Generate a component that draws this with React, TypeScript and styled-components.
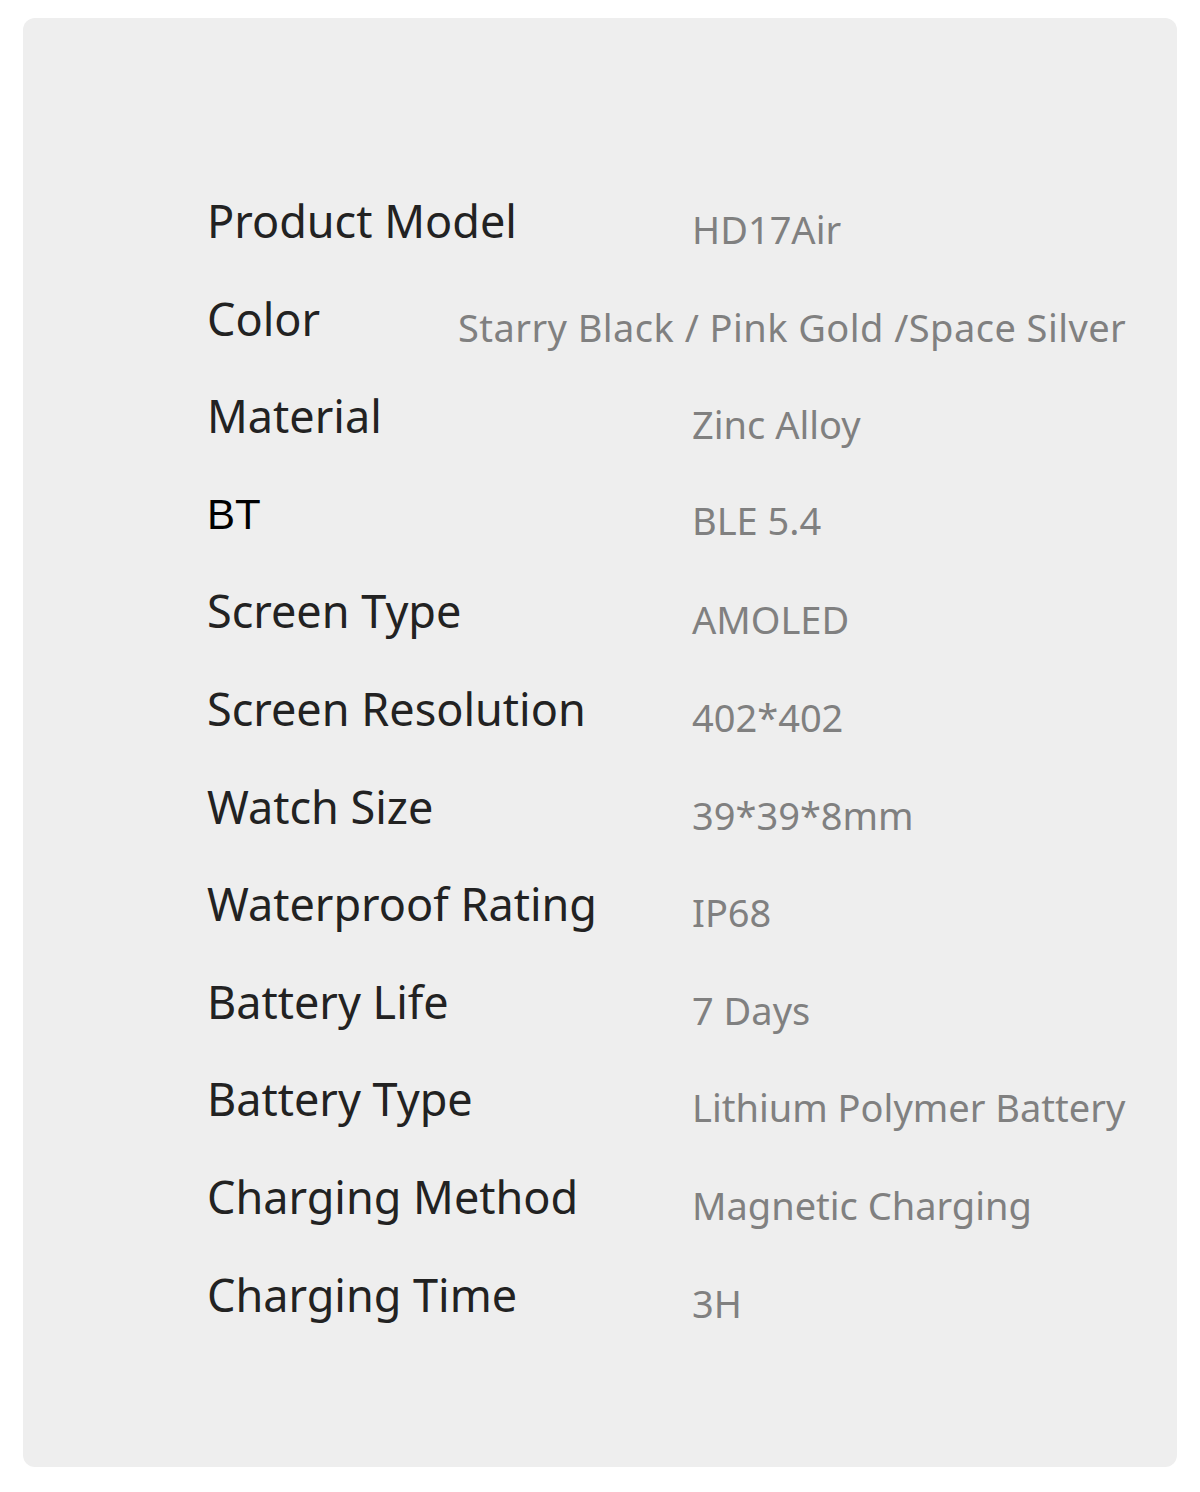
import styled, { createGlobalStyle } from "styled-components";

type Spec = {
  label: string;
  value: string;
  plain?: boolean;
  wide?: boolean;
};

const specs: Spec[] = [
  { label: "Product Model", value: "HD17Air" },
  { label: "Color", value: "Starry Black / Pink Gold /Space Silver", wide: true },
  { label: "Material", value: "Zinc Alloy" },
  { label: "BT", value: "BLE 5.4", plain: true },
  { label: "Screen Type", value: "AMOLED" },
  { label: "Screen Resolution", value: "402*402" },
  { label: "Watch Size", value: "39*39*8mm" },
  { label: "Waterproof Rating", value: "IP68" },
  { label: "Battery Life", value: "7 Days" },
  { label: "Battery Type", value: "Lithium Polymer Battery" },
  { label: "Charging Method", value: "Magnetic Charging" },
  { label: "Charging Time", value: "3H" },
];

const App = () => {
  return (
    <>
      <GlobalStyle />
      <Page>
        <Card>
          {specs.map((s) => (
            <Row key={s.label}>
              <Label $plain={s.plain} $wide={s.wide}>
                {s.label}
              </Label>
              <Value $wide={s.wide}>{s.value}</Value>
            </Row>
          ))}
        </Card>
      </Page>
    </>
  );
};

//  --- Styling ---
const GlobalStyle = createGlobalStyle`
  body {
    margin: 0;
    background: #ffffff;
    font-family: "Noto Sans", "Liberation Sans", sans-serif;
  }
`;

const Page = styled.main`
  width: 1200px;
  height: 1492px;
  padding: 18px 23px 25px 23px;
  box-sizing: border-box;
`;

const Card = styled.section`
  height: 100%;
  background-color: #eeeeee;
  border-radius: 12px;
  padding: 173px 0 0 184px;
  box-sizing: border-box;
`;

const Row = styled.div`
  display: flex;
  align-items: baseline;
  height: 97.6px;
`;

const Label = styled.span<{ $plain?: boolean; $wide?: boolean }>`
  flex: 0 0 ${(p) => (p.$wide ? "251px" : "485px")};
  font-size: ${(p) => (p.$plain ? "42px" : "45px")};
  font-family: ${(p) => (p.$plain ? `"Liberation Sans", sans-serif` : "inherit")};
  color: ${(p) => (p.$plain ? "#000000" : "#222222")};
  line-height: 60px;
  white-space: nowrap;
`;

const Value = styled.span<{ $wide?: boolean }>`
  font-size: 38px;
  letter-spacing: ${(p) => (p.$wide ? "0.45px" : "0")};
  color: #808080;
  line-height: 60px;
  white-space: nowrap;
  position: relative;
  top: 6px;
`;

export default App;
